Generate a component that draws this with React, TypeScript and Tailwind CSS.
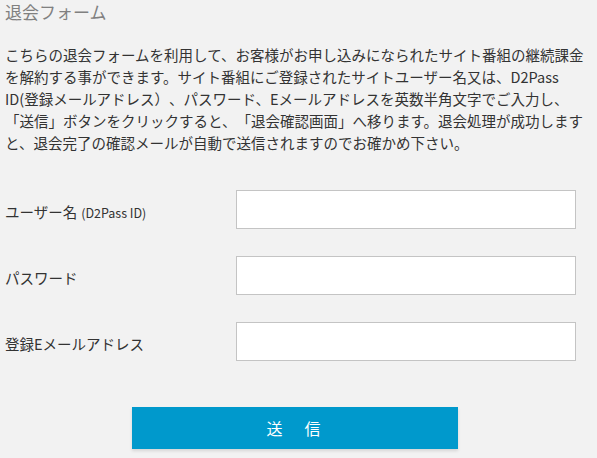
const font = { fontFamily: '"Noto Sans CJK JP", "Noto Sans", sans-serif' };

const lines = [
    'こちらの退会フォームを利用して、お客様がお申し込みになられたサイト番組の継続課金',
    'を解約する事ができます。サイト番組にご登録されたサイトユーザー名又は、D2Pass',
    'ID(登録メールアドレス）、パスワード、Eメールアドレスを英数半角文字でご入力し、',
    '「送信」ボタンをクリックすると、「退会確認画面」へ移ります。退会処理が成功します',
    'と、退会完了の確認メールが自動で送信されますのでお確かめ下さい。',
];

const fields = [
    { name: 'login_id', label: 'ユーザー名', sub: '(D2Pass ID)', type: 'text' },
    { name: 'password', label: 'パスワード', sub: '', type: 'password' },
    { name: 'email', label: '登録Eメールアドレス', sub: '', type: 'email' },
];

const App = () => {
    return (
        <div className="min-h-screen w-full bg-[#f2f2f2] pl-[5px] text-[#333] [text-spacing-trim:space-all]" style={font}>
            <h1 className="text-[17px] leading-[24px] font-normal text-[#808080]">退会フォーム</h1>

            <p className="mt-[20px] text-[14.5px] leading-[22px]">
                {lines.map((l) => (
                    <span key={l} className="block whitespace-nowrap">{l}</span>
                ))}
            </p>

            <form className="mt-[36px] flex flex-col gap-[27px]" onSubmit={(e) => e.preventDefault()}>
                {fields.map((f) => (
                    <div key={f.name} className="flex items-center">
                        <label htmlFor={f.name} className="w-[231px] pt-[4px] text-[14.5px] whitespace-nowrap">
                            {f.label}
                            {f.sub && <span className="ml-[4px] text-[12.5px]">{f.sub}</span>}
                        </label>
                        <input
                            id={f.name}
                            name={f.name}
                            type={f.type}
                            className="h-[39px] w-[340px] border border-[#c4c4c4] bg-white px-2 outline-none"
                        />
                    </div>
                ))}

                <div className="mt-[19px] pl-[127px]">
                    <button
                        type="submit"
                        className="h-[42px] w-[326px] bg-[#0099cc] text-[16px] tracking-[3px] text-white shadow-[0_2px_3px_rgba(0,0,0,0.12)]"
                    >
                        送　信
                    </button>
                </div>
            </form>
        </div>
    );
};

export default App;
